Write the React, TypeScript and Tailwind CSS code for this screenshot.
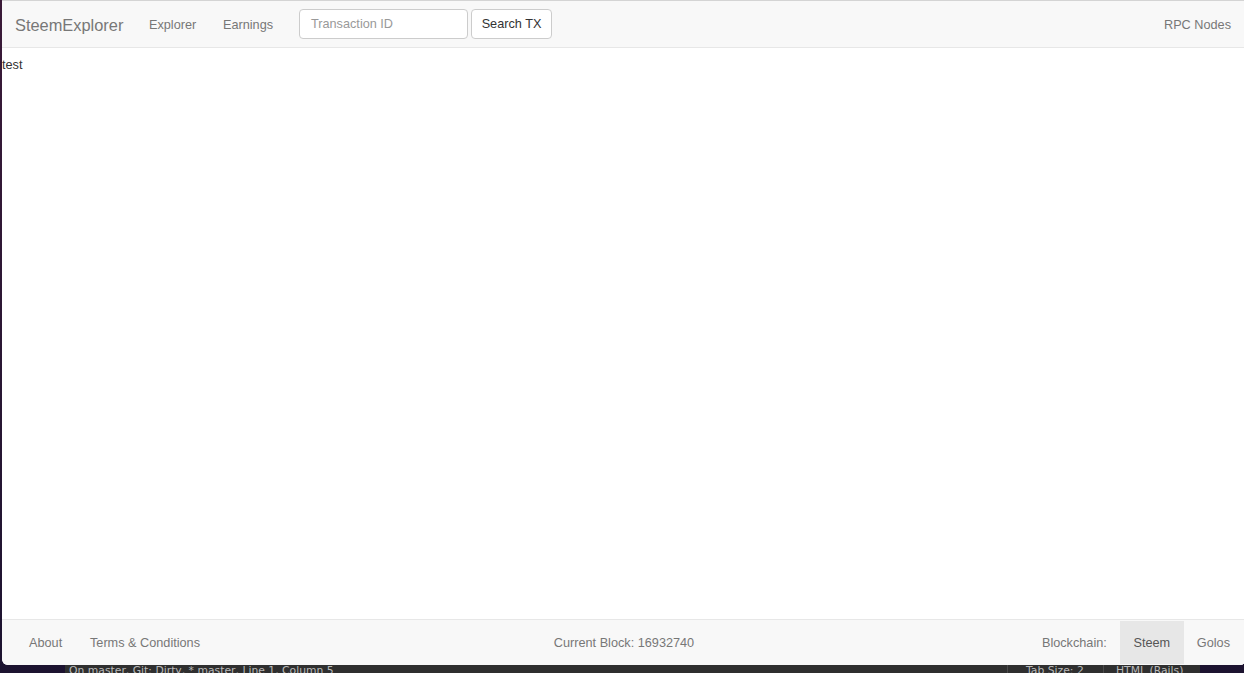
import React from "react";

export default function App() {
  const font = { fontFamily: '"Liberation Sans", Arial, sans-serif' } as React.CSSProperties;
  return (
    <div className="relative h-[673px] w-[1244px] overflow-hidden bg-gradient-to-b from-[#3a1a38] to-[#1c1330]" style={font}>
      {/* editor status bar behind the browser window */}
      <div className="absolute left-[65px] top-[660px] flex h-[22px] w-[1135px] items-center bg-[#2f2f2f] text-[10.8px] text-[#b8b8b8]" style={{ fontFamily: '"DejaVu Sans", sans-serif' }}>
        <span className="pl-[4px]">On master, Git: Dirty, * master, Line 1, Column 5</span>
        <div className="ml-auto flex h-full items-center">
          <div className="h-full w-px bg-[#4a4a4a]" />
          <span className="w-[95px] shrink-0 pl-[18px]">Tab Size: 2</span>
          <div className="h-full w-px bg-[#4a4a4a]" />
          <span className="w-[96px] shrink-0 pl-[12px]">HTML (Rails)</span>
        </div>
      </div>

      {/* browser window */}
      <div className="absolute left-[2px] top-0 flex h-[665px] w-[1244px] flex-col overflow-hidden rounded-b-[6px] border-t border-[#d4d4d4] bg-white">
        <nav className="flex h-[47px] shrink-0 items-center border-b border-[#e7e7e7] bg-[#f8f8f8] text-[12.7px] text-[#777]">
          <div className="w-[147px] shrink-0 pl-[13px] pt-[3px] text-[16.4px]">SteemExplorer</div>
          <div className="w-[74px] shrink-0 pt-[4px]">Explorer</div>
          <div className="w-[76px] shrink-0 pt-[4px]">Earnings</div>
          <div className="flex h-[30px] w-[169px] shrink-0 items-center rounded-[4px] border border-[#ccc] bg-white px-[11px] pt-[2px] text-[#999]">
            Transaction ID
          </div>
          <div className="ml-[3px] flex h-[30px] w-[81px] shrink-0 items-center justify-center rounded-[4px] border border-[#ccc] bg-white pt-[2px] text-[#333]">
            Search TX
          </div>
          <div className="ml-auto pr-[15px] pt-[4px]">RPC Nodes</div>
        </nav>

        <main className="flex-1 pt-[9px] text-[12.7px] leading-[16px] text-[#333]">test</main>

        <footer className="grid h-[46px] shrink-0 grid-cols-3 items-center border-t border-[#e7e7e7] bg-[#f8f8f8] pt-[2px] text-[12.7px] text-[#777]">
          <div className="flex items-center">
            <span className="box-content w-[61px] pl-[27px]">About</span>
            <span>Terms &amp; Conditions</span>
          </div>
          <div className="text-center">Current Block: 16932740</div>
          <div className="-mt-[2px] flex h-full items-center justify-end pr-[16px]">
            <span className="mr-[13px] pt-[2px]">Blockchain:</span>
            <span className="flex h-full w-[64px] items-center justify-center bg-[#e7e7e7] pt-[2px] text-[#555]">Steem</span>
            <span className="pl-[13px] pt-[2px]">Golos</span>
          </div>
        </footer>
      </div>
    </div>
  );
}
